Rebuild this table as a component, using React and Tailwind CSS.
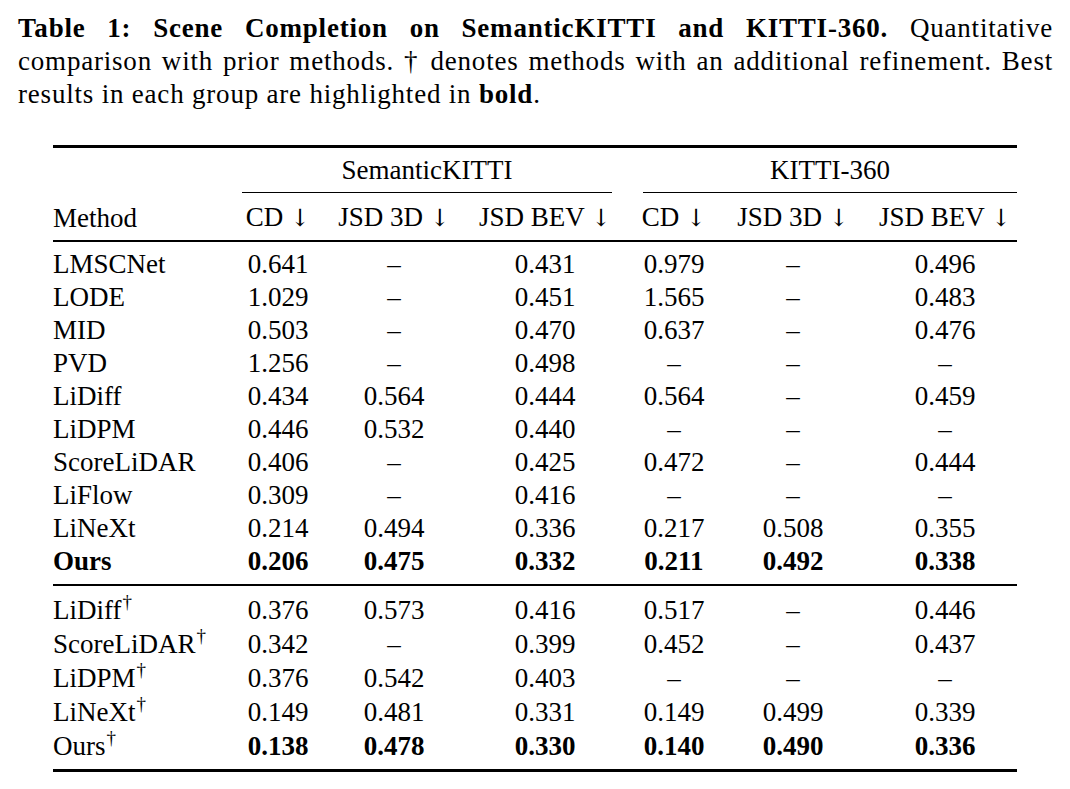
import React from "react";

const cols = "grid grid-cols-[180px_90px_142px_160px_98px_140px_154px]";

const mainRows = [
  ["LMSCNet", "0.641", "–", "0.431", "0.979", "–", "0.496"],
  ["LODE", "1.029", "–", "0.451", "1.565", "–", "0.483"],
  ["MID", "0.503", "–", "0.470", "0.637", "–", "0.476"],
  ["PVD", "1.256", "–", "0.498", "–", "–", "–"],
  ["LiDiff", "0.434", "0.564", "0.444", "0.564", "–", "0.459"],
  ["LiDPM", "0.446", "0.532", "0.440", "–", "–", "–"],
  ["ScoreLiDAR", "0.406", "–", "0.425", "0.472", "–", "0.444"],
  ["LiFlow", "0.309", "–", "0.416", "–", "–", "–"],
  ["LiNeXt", "0.214", "0.494", "0.336", "0.217", "0.508", "0.355"],
];

const refinedRows = [
  ["LiDiff", "0.376", "0.573", "0.416", "0.517", "–", "0.446"],
  ["ScoreLiDAR", "0.342", "–", "0.399", "0.452", "–", "0.437"],
  ["LiDPM", "0.376", "0.542", "0.403", "–", "–", "–"],
  ["LiNeXt", "0.149", "0.481", "0.331", "0.149", "0.499", "0.339"],
];

const Down = () => (
  <span className="font-['DejaVu_Serif'] text-[24px] font-normal">↓</span>
);

const headers = [
  "Method",
  <>CD <Down /></>,
  <>JSD 3D <Down /></>,
  <>JSD BEV <Down /></>,
  <>CD <Down /></>,
  <>JSD 3D <Down /></>,
  <>JSD BEV <Down /></>,
];

// last column sits a little right of its box centre, as in the picture
const cellClass = (i) =>
  i === 0 ? "text-left" : i === 6 ? "text-center pl-[10px]" : "text-center";

const Row = ({ cells, bold = [], dagger = false, height = "h-[33px]" }) => (
  <div className={`${cols} ${height} items-center`}>
    {cells.map((c, i) => (
      <div key={i} className={`${cellClass(i)} ${bold.includes(i) ? "font-bold" : ""}`}>
        {c}
        {i === 0 && dagger && (
          <span className="inline-block text-[19px] leading-none relative -top-[11px] ml-[1px]">†</span>
        )}
      </div>
    ))}
  </div>
);

export default function App() {
  return (
    <div
      className="w-[1070px] h-[789px] bg-white text-black overflow-hidden"
      style={{ fontFamily: '"Liberation Serif", "DejaVu Serif", serif' }}
    >
      {/* Caption */}
      <div className="pt-[12px] pl-[18px] w-[1053px] text-[27px] leading-[33px] tracking-[0.8px]">
        <div className="whitespace-nowrap text-justify [text-align-last:justify]">
          <span className="font-bold">Table 1: Scene Completion on SemanticKITTI and KITTI-360.</span>{" "}
          Quantitative
        </div>
        <div className="whitespace-nowrap text-justify [text-align-last:justify]">
          comparison with prior methods. † denotes methods with an additional refinement. Best
        </div>
        <div className="whitespace-nowrap">
          results in each group are highlighted in <span className="font-bold">bold</span>.
        </div>
      </div>

      {/* Table */}
      <div className="ml-[53px] mt-[34px] w-[964px] text-[27px] leading-[33px]">
        <div className="h-[3px] bg-black" />

        {/* group headers */}
        <div className={`${cols} pt-[6px]`}>
          <div />
          <div className="col-span-3 flex flex-col">
            <div className="ml-[9px] mr-[13px] text-center h-[38px]">SemanticKITTI</div>
            <div className="ml-[9px] mr-[13px] h-[1px] bg-black" />
          </div>
          <div className="col-span-3 flex flex-col">
            <div className="ml-[18px] text-center h-[38px]">KITTI-360</div>
            <div className="ml-[18px] h-[1px] bg-black" />
          </div>
        </div>

        {/* column headers */}
        <div className="pt-[8px] pb-[6px]">
          <Row cells={headers} />
        </div>
        <div className="h-[2px] bg-black" />

        <div className="pt-[6px] pb-[6px]">
          {mainRows.map((r) => (
            <Row key={r[0]} cells={r} />
          ))}
          <Row
            cells={["Ours", "0.206", "0.475", "0.332", "0.211", "0.492", "0.338"]}
            bold={[0, 1, 2, 3, 4, 5, 6]}
          />
        </div>
        <div className="h-[2px] bg-black" />

        <div className="pt-[7px] pb-[6px]">
          {refinedRows.map((r) => (
            <Row key={r[0]} cells={r} dagger height="h-[34px]" />
          ))}
          <Row
            cells={["Ours", "0.138", "0.478", "0.330", "0.140", "0.490", "0.336"]}
            bold={[1, 2, 3, 4, 5, 6]}
            dagger
            height="h-[34px]"
          />
        </div>
        <div className="h-[3px] bg-black" />
      </div>
    </div>
  );
}
